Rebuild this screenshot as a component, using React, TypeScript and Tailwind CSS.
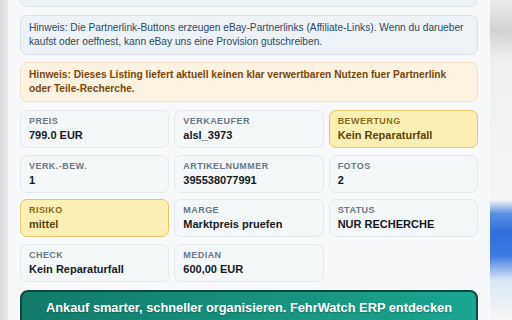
import React from "react";

type Cell = { label: string; value: string; hl?: boolean };

const cells: Cell[] = [
  { label: "Preis", value: "799.0 EUR" },
  { label: "Verkaeufer", value: "alsl_3973" },
  { label: "Bewertung", value: "Kein Reparaturfall", hl: true },
  { label: "Verk.-Bew.", value: "1" },
  { label: "Artikelnummer", value: "395538077991" },
  { label: "Fotos", value: "2" },
  { label: "Risiko", value: "mittel", hl: true },
  { label: "Marge", value: "Marktpreis pruefen" },
  { label: "Status", value: "NUR RECHERCHE" },
  { label: "Check", value: "Kein Reparaturfall" },
  { label: "Median", value: "600,00 EUR" },
];

function Card({ c }: { c: Cell }) {
  return (
    <div
      className={
        "h-[38px] rounded-[7px] border px-[8px] pt-[5px] " +
        (c.hl
          ? "bg-[#fcefb4] border-[#e3c967]"
          : "bg-[#f4f7f8] border-[#e3e8eb]")
      }
    >
      <div
        className={
          "text-[9px] leading-[11px] font-bold uppercase tracking-[0.05em] " +
          (c.hl ? "text-[#8a6a14]" : "text-[#6b7683]")
        }
      >
        {c.label}
      </div>
      <div
        className={
          "text-[11px] leading-[15px] mt-[1px] font-semibold " +
          (c.hl ? "text-[#5a4508]" : "text-[#141a22]")
        }
      >
        {c.value}
      </div>
    </div>
  );
}

export default function App() {
  return (
    <div
      className="w-[512px] h-[320px] overflow-hidden flex"
      style={{ fontFamily: '"Liberation Sans", Arial, sans-serif' }}
    >
      <div className="w-[8px] shrink-0 bg-[linear-gradient(to_right,#dcdcdc,#ececec)]" />
      <div className="w-[482px] shrink-0 bg-[#f6f8f9] px-[12px] flex flex-col shadow-[2px_0_6px_rgba(0,0,0,0.08)]">
        <div className="h-[7px] shrink-0 rounded-b-[7px] border border-t-0 border-[#dde6ec] bg-[#eef3f6]" />
        <div className="mt-[8px] h-[40px] shrink-0 rounded-[7px] border border-[#d5e1e9] bg-[#edf2f6] px-[8px] pt-[5px] text-[10.2px] leading-[14px] text-[#2c4a63]">
          Hinweis: Die Partnerlink-Buttons erzeugen eBay-Partnerlinks (Affiliate-Links). Wenn du darueber kaufst oder oeffnest, kann eBay uns eine Provision gutschreiben.
        </div>
        <div className="mt-[7px] h-[40px] shrink-0 rounded-[7px] border border-[#f3dfbf] bg-[#fcf2e2] px-[8px] pt-[5px] text-[10.2px] leading-[14px] font-bold text-[#7a4708]">
          Hinweis: Dieses Listing liefert aktuell keinen klar verwertbaren Nutzen fuer Partnerlink oder Teile-Recherche.
        </div>
        <div className="mt-[8px] grid grid-cols-3 gap-x-[5px] gap-y-[6.5px]">
          {cells.map((c) => (
            <Card key={c.label} c={c} />
          ))}
        </div>
        <div className="mt-[8px] h-[40px] shrink-0 rounded-[8px] border-2 border-[#0c4a40] bg-[linear-gradient(to_right,#137a68,#1aa78f)] flex items-start justify-center pt-[8px] text-[12.8px] leading-[16px] font-bold text-white [text-shadow:0_1px_1px_rgba(0,0,0,0.25)]">
          Ankauf smarter, schneller organisieren. FehrWatch ERP entdecken
        </div>
      </div>
      <div className="w-[22px] shrink-0 bg-[linear-gradient(to_bottom,#ececec_0px,#d2d2d2_30px,#efefef_60px,#f4f4f4_200px,#5a90e2_214px,#2f6fdc_232px,#3d7ce0_256px,#dbe6f5_280px,#f6f6f6_320px)]" />
    </div>
  );
}
